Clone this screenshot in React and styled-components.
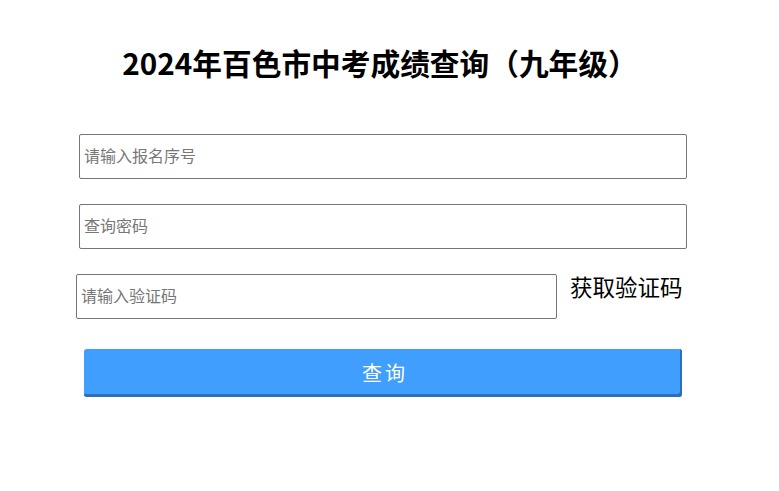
import React from 'react'
import styled, { createGlobalStyle } from 'styled-components'

const GlobalStyle = createGlobalStyle`
  body {
    margin: 0;
    background: #fff;
    font-family: "Noto Sans CJK SC", "Noto Sans", sans-serif;
  }
`

const Page = styled.div`
  width: 779px;
  height: 491px;
  padding-top: 42px;
  box-sizing: border-box;
`

const Title = styled.h1`
  margin: 0;
  padding-right: 19px;
  font-size: 29.7px;
  line-height: 42px;
  font-weight: 700;
  text-align: center;
  color: #000;
`

const Form = styled.form`
  display: flex;
  flex-direction: column;
  padding: 50px 0 0 76px;
`

const Row = styled.div`
  display: flex;
  align-items: flex-start;
  gap: 13px;
  margin-left: ${p => p.$offset || 0}px;
  margin-bottom: ${p => p.$gap || 25}px;
`

const Input = styled.input`
  width: ${p => p.$width}px;
  height: 45px;
  box-sizing: border-box;
  padding: 0 4px 4px;
  border: 1px solid #767676;
  border-radius: 2px;
  font-family: "Noto Sans CJK SC", sans-serif;
  font-size: 16px;
  color: #333;
  outline: none;

  &::placeholder {
    color: #777;
  }
`

const CodeLink = styled.span`
  font-size: 22.5px;
  line-height: 24px;
  color: #000;
  cursor: pointer;
`

const Button = styled.button`
  width: 598px;
  height: 48px;
  margin-left: 8px;
  padding: 0 0 2px 4px;
  border: none;
  border-radius: 3px;
  background: #409eff;
  box-shadow: inset -2px -3px 0 #2f6fb3;
  color: #fff;
  font-family: "Noto Sans CJK SC", sans-serif;
  font-size: 20px;
  letter-spacing: 3px;
  cursor: pointer;
`

export default function App() {
  return (
    <>
      <GlobalStyle />
      <Page>
        <Title>2024年百色市中考成绩查询（九年级）</Title>
        <Form>
          <Row $offset={3}>
            <Input $width={608} placeholder="请输入报名序号" />
          </Row>
          <Row $offset={3}>
            <Input $width={608} placeholder="查询密码" />
          </Row>
          <Row $gap={30}>
            <Input $width={481} placeholder="请输入验证码" />
            <CodeLink>获取验证码</CodeLink>
          </Row>
          <Button type="button">查询</Button>
        </Form>
      </Page>
    </>
  )
}
